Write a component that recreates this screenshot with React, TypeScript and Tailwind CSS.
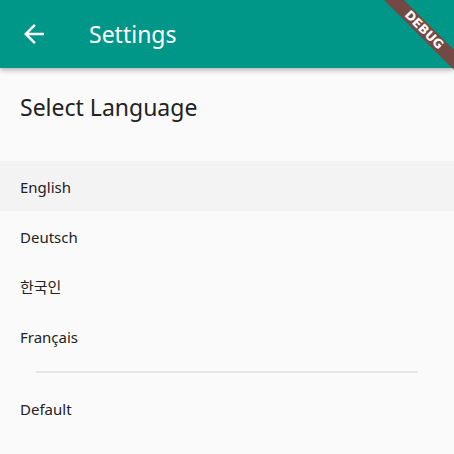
import React from "react";

const font = { fontFamily: '"Noto Sans", "Noto Sans CJK KR", sans-serif' };

export default function App() {
  const items = ["English", "Deutsch", "한국인", "Français"];
  return (
    <div className="relative w-[454px] h-[454px] overflow-hidden bg-[#fafafa] text-[#222222]" style={font}>
      <div className="relative z-10 h-[68px] bg-[#009688] flex items-center shadow-[0_2px_5px_rgba(0,0,0,0.3)]">
        <div className="w-[68px] h-[68px] flex items-center justify-center">
          <svg width="30" height="30" viewBox="0 0 24 24" fill="white">
            <path d="M20 11H7.83l5.59-5.59L12 4l-8 8 8 8 1.41-1.41L7.83 13H20v-2z" />
          </svg>
        </div>
        <div className="ml-[21px] text-white text-[23px] leading-none">Settings</div>
      </div>
      <div className="h-[93px] flex items-center pl-[20px] pb-[14px] text-[23px]">Select Language</div>
      <div className="flex flex-col">
        {items.map((t, i) => (
          <div key={t} className={`h-[50px] flex items-center pl-[20px] pt-[3px] text-[15px] ${i === 0 ? "bg-[#f3f3f3]" : ""}`}>
            {t}
          </div>
        ))}
        <div className="h-[22px] flex items-center px-[36px]">
          <div className="h-[2px] w-full bg-[#e6e6e6]" />
        </div>
        <div className="h-[50px] flex items-center pl-[20px] pt-[3px] text-[15px]">Default</div>
      </div>
      <div
        className="absolute z-20 w-[120px] h-[14px] flex items-center justify-center bg-[rgba(183,28,28,0.63)] text-white font-bold text-[12.5px] leading-none left-[364px] top-[23px] rotate-45"
        style={{ fontFamily: '"DejaVu Sans", sans-serif' }}
      >
        DEBUG
      </div>
    </div>
  );
}
